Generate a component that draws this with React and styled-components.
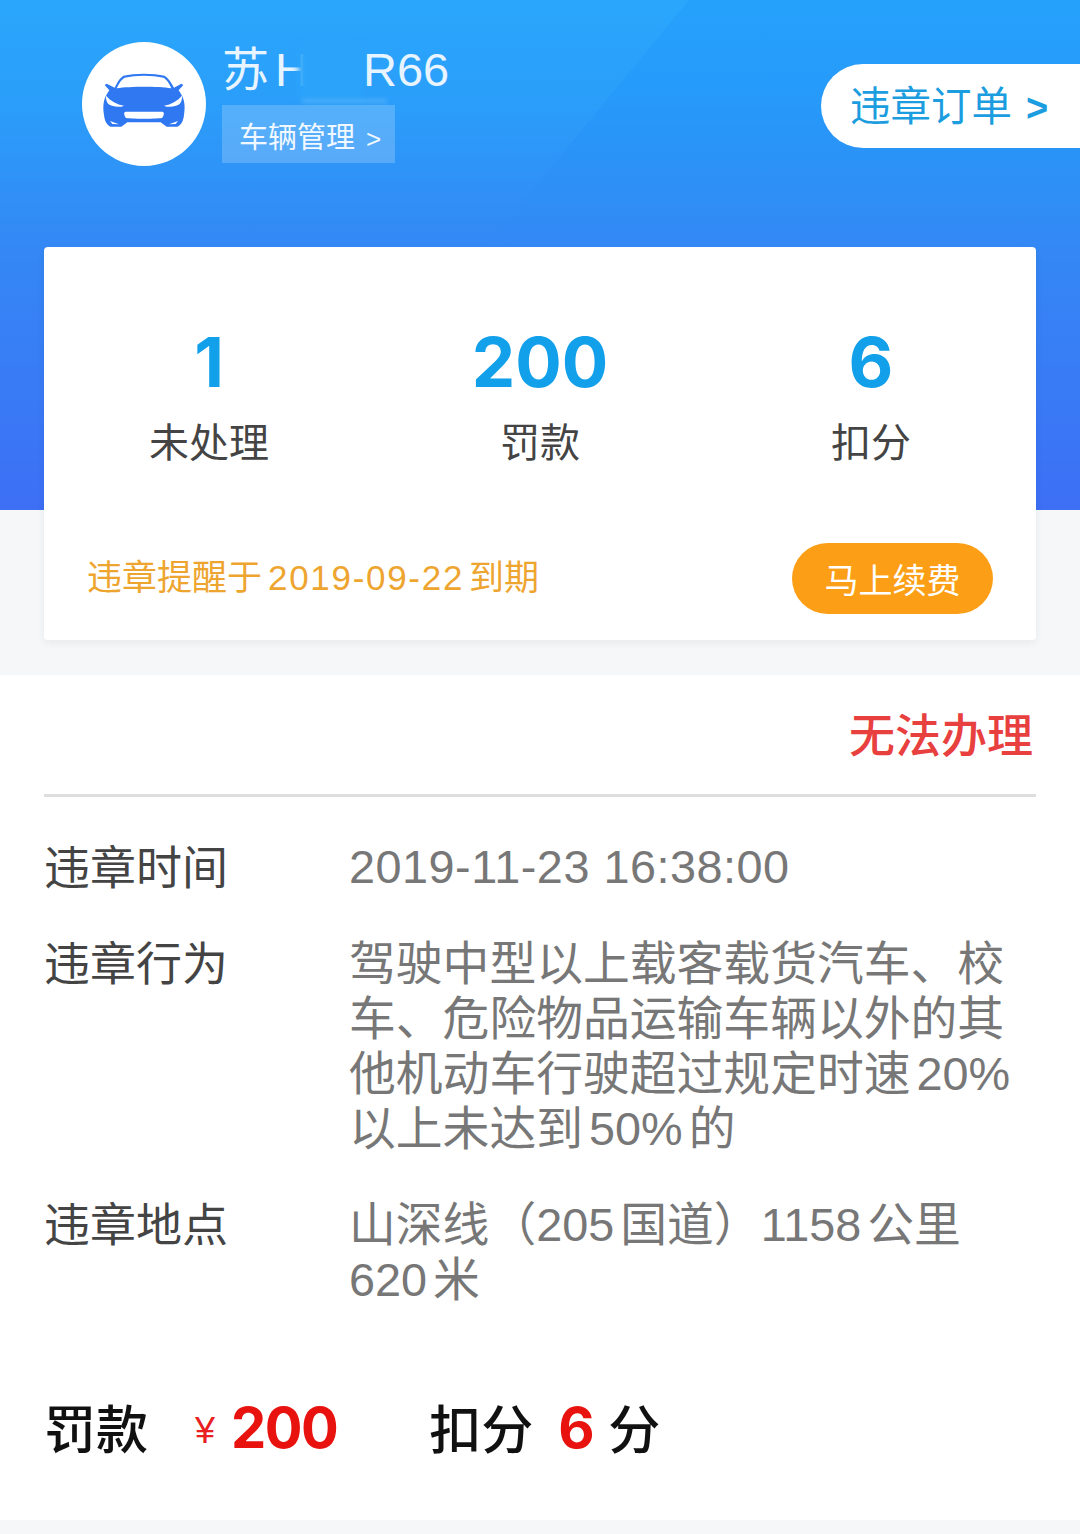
import React from 'react';
import styled, { createGlobalStyle } from 'styled-components';

const FONT = `"Noto Sans CJK SC", "Liberation Sans", sans-serif`;
const NUM = `"Liberation Sans", "Noto Sans CJK SC", sans-serif`;
const HEAVY = `Inter, "Liberation Sans", sans-serif`;

const GlobalStyle = createGlobalStyle`
  html, body { margin: 0; padding: 0; background: #f6f7f9; }
  body { font-family: ${FONT}; }
`;

const CarIcon = () => (
  <svg width="100" height="70" viewBox="0 0 300 210">
    <path
      fill="#2f78f2"
      d="M62 68 C70 50 78 38 88 32 C120 24 180 24 212 32 C222 38 232 52 240 68 L262 56 L268 60 L254 76 C268 95 276 115 270 150 C268 168 262 180 250 185 L218 185 L200 172 L100 172 L82 185 L50 185 C38 180 32 168 30 150 C24 115 32 95 46 76 L32 60 L38 56 Z"
    />
    <path fill="#fff" d="M68 70 C76 52 84 42 92 38 C125 30 175 30 208 38 C216 42 226 54 232 70 C190 64 110 64 68 70 Z" />
    <path fill="#fff" d="M36 92 C50 108 68 118 90 122 C78 128 55 126 44 118 C38 112 35 102 36 92 Z" />
    <path fill="#fff" d="M264 92 C250 108 232 118 210 122 C222 128 245 126 256 118 C262 112 265 102 264 92 Z" />
    <path fill="#fff" d="M95 140 L205 140 C212 142 210 150 205 158 C200 162 100 162 95 158 C90 150 88 142 95 140 Z" />
    <path fill="#fff" d="M48 168 L75 178 L55 177 Z" />
    <path fill="#fff" d="M252 168 L225 178 L245 177 Z" />
  </svg>
);

const App = () => (
  <Page>
    <GlobalStyle />
    <Hero>
      <Facet />
      <Vehicle>
        <Avatar><CarIcon /></Avatar>
        <VehicleInfo>
          <Plate>
            <PlateProvince>苏</PlateProvince>H<PlateGap />R66
            <PlateBlur />
            <PlateStreak />
          </Plate>
          <ManageLink>车辆管理<Chevron>&gt;</Chevron></ManageLink>
        </VehicleInfo>
      </Vehicle>
      <OrderTab>违章订单<OrderArrow>&gt;</OrderArrow></OrderTab>
    </Hero>

    <SummaryBand>
      <SummaryCard>
        <Stats>
          <Stat><StatValue>1</StatValue><StatLabel>未处理</StatLabel></Stat>
          <Stat><StatValue>200</StatValue><StatLabel>罚款</StatLabel></Stat>
          <Stat><StatValue>6</StatValue><StatLabel>扣分</StatLabel></Stat>
        </Stats>
        <Reminder>
          <ReminderText>违章提醒于<ReminderDate>2019-09-22</ReminderDate>到期</ReminderText>
          <RenewButton>马上续费</RenewButton>
        </Reminder>
      </SummaryCard>
    </SummaryBand>

    <Detail>
      <StatusRow><Status>无法办理</Status></StatusRow>
      <Rows>
        <Row>
          <RowLabel>违章时间</RowLabel>
          <TimeValue>2019-11-23 16:38:00</TimeValue>
        </Row>
        <Row>
          <RowLabel>违章行为</RowLabel>
          <RowValue>驾驶中型以上载客载货汽车、校<br />车、危险物品运输车辆以外的其<br />他机动车行驶超过规定时速 20%<br />以上未达到 50% 的</RowValue>
        </Row>
        <Row>
          <RowLabel>违章地点</RowLabel>
          <RowValue>山深线（205 国道）1158 公里<br />620 米</RowValue>
        </Row>
      </Rows>
      <Totals>
        <TotalLabel>罚款</TotalLabel>
        <Yen>¥</Yen>
        <Amount $left={16}>200</Amount>
        <TotalLabel $left={92}>扣分</TotalLabel>
        <Amount $left={25}>6</Amount>
        <TotalLabel $left={15}>分</TotalLabel>
      </Totals>
    </Detail>
  </Page>
);

const Page = styled.div`
  width: 1080px;
  height: 1534px;
  overflow: hidden;
  background: #f6f7f9;
`;

const Hero = styled.header`
  position: relative;
  height: 247px;
  padding: 42px 0 0 82px;
  box-sizing: border-box;
  display: flex;
  justify-content: space-between;
  align-items: flex-start;
  overflow: hidden;
  background: linear-gradient(180deg, #2aa7fc 0%, #2a9efa 100px, #3488f5 247px);
`;

const Facet = styled.div`
  position: absolute;
  inset: 0;
  background: linear-gradient(180deg, rgba(0, 120, 250, 0.12) 0%, rgba(0, 110, 245, 0.09) 50%, rgba(0, 100, 240, 0) 100%);
  clip-path: polygon(689px 0, 100% 0, 100% 100%, 485px 100%);
`;

const Vehicle = styled.div`
  position: relative;
  display: flex;
  gap: 16px;
`;

const Avatar = styled.div`
  width: 124px;
  height: 124px;
  border-radius: 50%;
  background: #fff;
  display: flex;
  align-items: center;
  justify-content: center;
  padding-bottom: 8px;
  box-sizing: border-box;
`;

const VehicleInfo = styled.div`
  display: flex;
  flex-direction: column;
  align-items: flex-start;
`;

const Plate = styled.div`
  position: relative;
  height: 63px;
  line-height: 56px;
  font-size: 47px;
  color: #e8f4ff;
  font-family: ${NUM};
  white-space: nowrap;
`;

const PlateProvince = styled.span`
  margin-right: 6px;
`;

const PlateGap = styled.span`
  display: inline-block;
  width: 54px;
`;

const PlateBlur = styled.div`
  position: absolute;
  top: 0;
  left: 76px;
  width: 64px;
  height: 58px;
  background: #2ba3fa;
  filter: blur(3px);
`;

const PlateStreak = styled.div`
  position: absolute;
  top: 57px;
  left: 80px;
  width: 85px;
  height: 4px;
  background: rgba(255, 255, 255, 0.16);
  filter: blur(2px);
`;

const ManageLink = styled.div`
  width: 173px;
  height: 58px;
  box-sizing: border-box;
  padding-left: 17px;
  background: rgba(255, 255, 255, 0.2);
  color: #f1f8ff;
  font-size: 29px;
  line-height: 60px;
  white-space: nowrap;
`;

const Chevron = styled.span`
  margin-left: 11px;
  font-size: 26px;
  font-family: ${NUM};
`;

const OrderTab = styled.div`
  position: relative;
  margin-top: 22px;
  width: 259px;
  height: 84px;
  box-sizing: border-box;
  padding-left: 29px;
  border-radius: 42px 0 0 42px;
  background: #fff;
  color: #1c9de0;
  font-size: 40.5px;
  line-height: 80px;
  white-space: nowrap;
`;

const OrderArrow = styled.span`
  margin-left: 14px;
  font-family: ${NUM};
  font-weight: 700;
  font-size: 38px;
`;

const SummaryBand = styled.section`
  height: 428px;
  padding: 0 44px;
  box-sizing: border-box;
  background: linear-gradient(180deg, #3488f5 0%, #3d6ff5 263px, #f6f7f9 263px);
`;

const SummaryCard = styled.div`
  height: 393px;
  background: #fff;
  border-radius: 4px;
  box-shadow: 0 3px 8px rgba(0, 0, 0, 0.06);
  display: flex;
  flex-direction: column;
`;

const Stats = styled.div`
  display: grid;
  grid-template-columns: 330px 332px 330px;
  padding-top: 76px;
`;

const Stat = styled.div`
  display: flex;
  flex-direction: column;
  align-items: center;
`;

const StatValue = styled.div`
  font-family: ${HEAVY};
  font-weight: 700;
  font-size: 69px;
  line-height: 78px;
  color: #12a0ea;
`;

const StatLabel = styled.div`
  margin-top: 12px;
  font-size: 40px;
  line-height: 54px;
  color: #444;
`;

const Reminder = styled.div`
  margin-top: 76px;
  padding: 0 43px;
  display: flex;
  justify-content: space-between;
  align-items: center;
`;

const ReminderText = styled.div`
  margin-bottom: 8px;
  font-size: 35px;
  color: #eea52f;
  white-space: nowrap;
`;

const ReminderDate = styled.span`
  margin: 0 5px 0 6px;
  font-family: ${NUM};
  letter-spacing: 1.7px;
`;

const RenewButton = styled.div`
  width: 201px;
  height: 71px;
  border-radius: 36px;
  background: #fd9f16;
  color: #fff;
  font-size: 34px;
  line-height: 71px;
  text-align: center;
`;

const Detail = styled.section`
  height: 845px;
  background: #fff;
  padding: 0 44px;
  box-sizing: border-box;
`;

const StatusRow = styled.div`
  height: 119px;
  border-bottom: 3px solid #dedede;
  display: flex;
  justify-content: flex-end;
  align-items: flex-start;
`;

const Status = styled.div`
  margin: 26px 3px 0 0;
  font-size: 46px;
  font-weight: 500;
  line-height: 62px;
  color: #e8403f;
  white-space: nowrap;
`;

const Rows = styled.div`
  padding-top: 40px;
  display: flex;
  flex-direction: column;
  gap: 38px;
`;

const Row = styled.div`
  display: grid;
  grid-template-columns: 305px 1fr;
  line-height: 55px;
`;

const RowLabel = styled.div`
  font-size: 46px;
  color: #444;
`;

const RowValue = styled.div`
  padding-top: 4px;
  margin-bottom: -1px;
  font-family: ${NUM};
  font-size: 46.8px;
  color: #777;
  word-spacing: -7px;
  white-space: nowrap;
`;

const TimeValue = styled(RowValue)`
  padding-top: 3px;
  margin-bottom: 0;
  word-spacing: 0;
  letter-spacing: 0.5px;
`;

const Totals = styled.div`
  margin-top: 84px;
  display: flex;
  align-items: center;
  height: 70px;
`;

const TotalLabel = styled.span`
  margin-left: ${({ $left }) => $left || 0}px;
  font-size: 52px;
  font-weight: 500;
  color: #111;
  white-space: nowrap;
`;

const Yen = styled.span`
  margin: 10px 0 0 47px;
  font-family: ${NUM};
  font-size: 36px;
  color: #e8201f;
`;

const Amount = styled.span`
  margin-top: 4px;
  margin-left: ${({ $left }) => $left}px;
  font-family: ${HEAVY};
  font-weight: 700;
  font-size: 56px;
  letter-spacing: -1.5px;
  color: #e8120f;
`;

export default App;
